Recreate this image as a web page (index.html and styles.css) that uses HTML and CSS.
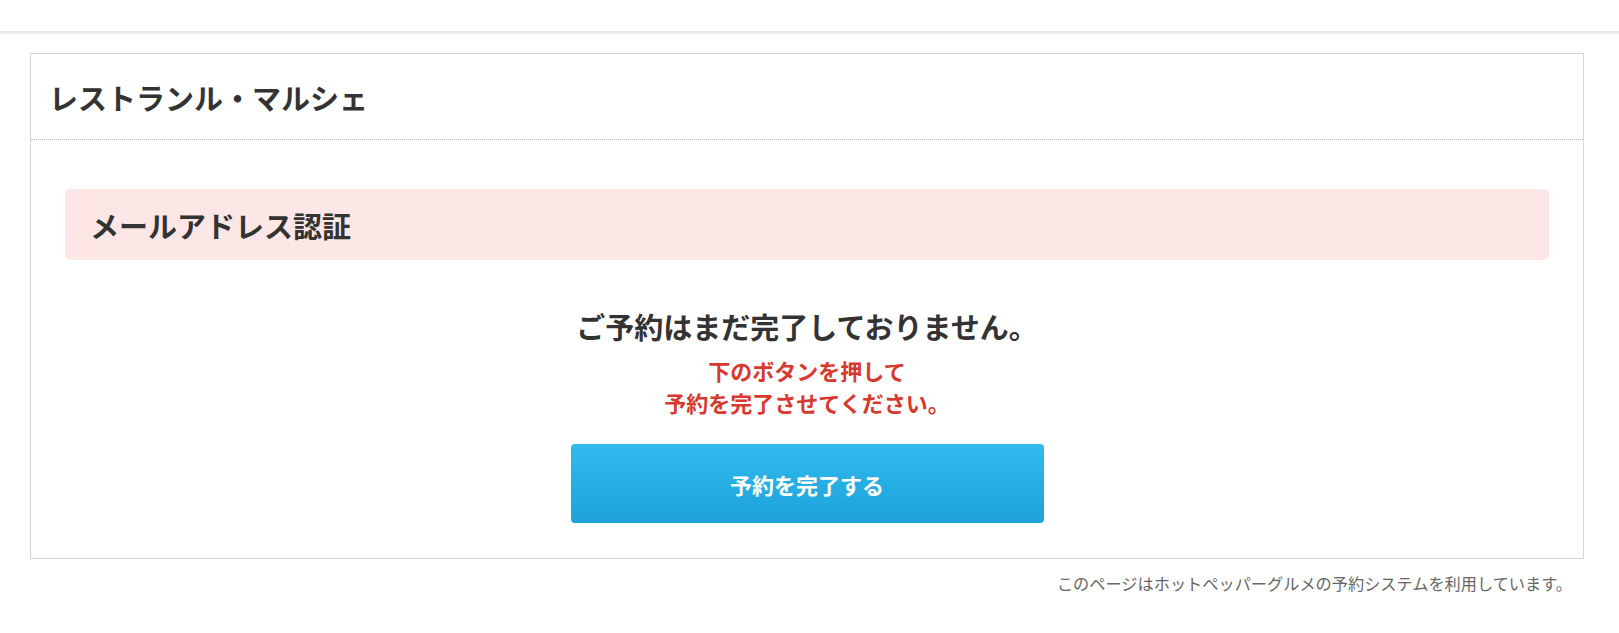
FILE: index.html
```html
<!DOCTYPE html>
<html lang="ja">

<head>
  <meta charset="UTF-8">
  <meta name="viewport" content="width=device-width, initial-scale=1.0">
  <title>メールアドレス認証 | レストランル・マルシェ</title>
  <link rel="stylesheet" href="styles.css">
</head>

<body>
  <div class="topbar"></div>

  <div class="wrap">
    <div class="card">
      <div class="card-head">
        <h1 class="shop-name">レストランル・マルシェ</h1>
      </div>
      <div class="card-body">
        <h2 class="section-title">メールアドレス認証</h2>
        <p class="lead">ご予約はまだ完了しておりません。</p>
        <p class="notice">下のボタンを押して<br>予約を完了させてください。</p>
        <a href="#" class="btn-complete">予約を完了する</a>
      </div>
    </div>
    <p class="powered">このページはホットペッパーグルメの予約システムを利用しています。</p>
  </div>
</body>

</html>
```

FILE: styles.css
```css
html,
body {
  margin: 0;
  padding: 0;
  background: #fff;
  color: #333;
  font-family: "Noto Sans CJK JP", "Noto Sans", sans-serif;
}

.topbar {
  height: 31px;
  border-bottom: 3px solid #ebebeb;
}

.wrap {
  width: 1554px;
  margin: 19px 0 0 30px;
}

.card {
  border: 1px solid #d6d6d6;
  background: #fff;
}

.card-head {
  height: 85px;
  display: flex;
  align-items: center;
  padding: 0 18px;
  border-bottom: 1px dotted #b5b5b5;
}

.shop-name {
  margin: 0;
  font-size: 29px;
  font-weight: 700;
  line-height: 40px;
}

.card-body {
  padding: 49px 34px 35px;
  display: flex;
  flex-direction: column;
  align-items: center;
}

.section-title {
  align-self: stretch;
  margin: 0;
  height: 71px;
  display: flex;
  align-items: center;
  padding: 0 25px;
  background: #fde6e6;
  border-radius: 5px;
  font-size: 29px;
  font-weight: 700;
}

.lead {
  margin: 46px 0 0;
  font-size: 29px;
  font-weight: 700;
  line-height: 40px;
}

.notice {
  margin: 8px 0 0;
  color: #d8392e;
  font-size: 22px;
  font-weight: 700;
  line-height: 32px;
  text-align: center;
}

.btn-complete {
  margin-top: 26px;
  width: 473px;
  height: 79px;
  display: flex;
  align-items: center;
  justify-content: center;
  border-radius: 4px;
  background: linear-gradient(#31bbef, #1ca2d9);
  color: #fff;
  font-size: 22px;
  font-weight: 700;
  text-decoration: none;
}

.powered {
  margin: 12px 12px 0 0;
  text-align: right;
  color: #666;
  font-size: 16.2px;
  line-height: 24px;
}
```
